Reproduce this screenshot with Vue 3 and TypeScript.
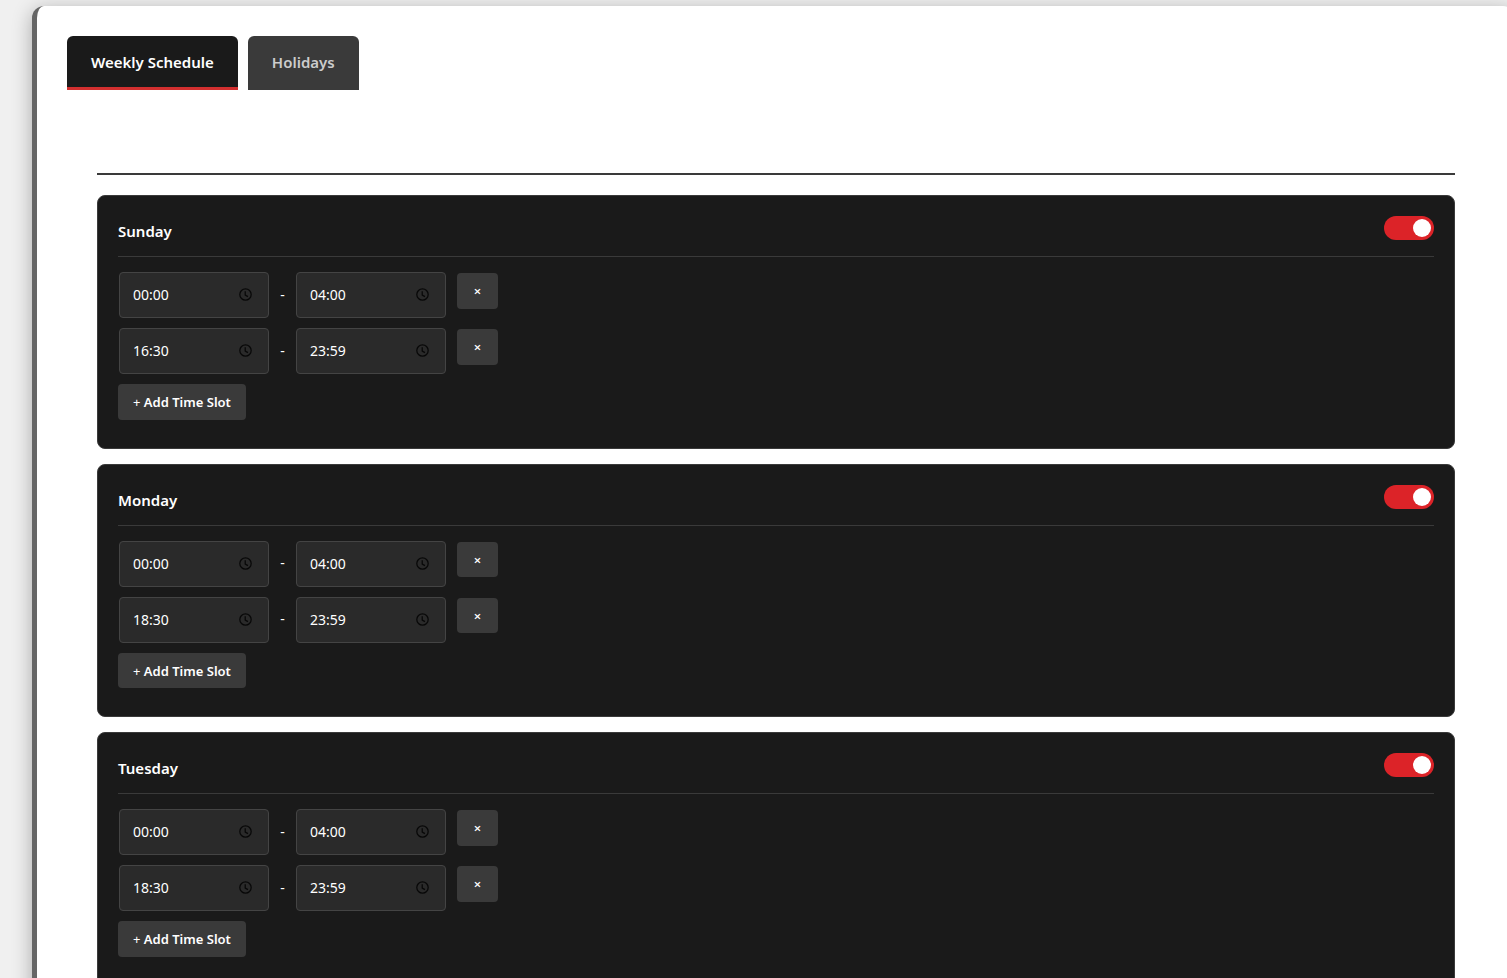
<script setup lang="ts">
import { ref } from 'vue'

interface Slot {
  from: string
  to: string
}

interface Day {
  name: string
  open: boolean
  slots: Slot[]
}

const tabs = ['Weekly Schedule', 'Holidays']
const activeTab = ref(tabs[0])

const days = ref<Day[]>([
  { name: 'Sunday', open: true, slots: [{ from: '00:00', to: '04:00' }, { from: '16:30', to: '23:59' }] },
  { name: 'Monday', open: true, slots: [{ from: '00:00', to: '04:00' }, { from: '18:30', to: '23:59' }] },
  { name: 'Tuesday', open: true, slots: [{ from: '00:00', to: '04:00' }, { from: '18:30', to: '23:59' }] },
])

function addSlot(day: Day) {
  day.slots.push({ from: '09:00', to: '17:00' })
}

function removeSlot(day: Day, index: number) {
  day.slots.splice(index, 1)
}
</script>

<template>
  <div class="page">
    <main class="panel">
      <nav class="tabs" role="tablist">
        <button
          v-for="tab in tabs"
          :key="tab"
          type="button"
          role="tab"
          class="tab"
          :class="{ active: tab === activeTab }"
          :aria-selected="tab === activeTab"
          @click="activeTab = tab"
        >{{ tab }}</button>
      </nav>

      <div class="content">
        <div class="divider"></div>
        <section v-for="day in days" :key="day.name" class="card">
          <header class="card-header">
            <h3 class="day">{{ day.name }}</h3>
            <input v-model="day.open" type="checkbox" role="switch" class="toggle" :aria-label="day.name" />
          </header>

          <div v-for="(slot, i) in day.slots" :key="i" class="slot">
            <label class="time">
              <input v-model="slot.from" type="text" class="time-input" :aria-label="day.name + ' start ' + (i + 1)" />
              <svg class="clock" viewBox="0 0 24 24" aria-hidden="true">
                <circle cx="12" cy="12" r="10.5" />
                <path d="M11.5 6v7l5 3" />
              </svg>
            </label>
            <span class="dash">-</span>
            <label class="time">
              <input v-model="slot.to" type="text" class="time-input" :aria-label="day.name + ' end ' + (i + 1)" />
              <svg class="clock" viewBox="0 0 24 24" aria-hidden="true">
                <circle cx="12" cy="12" r="10.5" />
                <path d="M11.5 6v7l5 3" />
              </svg>
            </label>
            <button type="button" class="btn remove" aria-label="Remove time slot" @click="removeSlot(day, i)">×</button>
          </div>

          <button type="button" class="btn" @click="addSlot(day)"><span class="plus">+</span> Add Time Slot</button>
        </section>
      </div>
    </main>
  </div>
</template>

<style>
body {
  margin: 0;
  background: #f0f0f0;
}
</style>

<style scoped>
.page {
  box-sizing: border-box;
  height: 100vh;
  overflow: hidden;
  padding: 6px 0 0 32px;
  background: #f0f0f0;
  font-family: 'Segoe UI', 'Noto Sans', 'Open Sans', sans-serif;
}

.panel {
  margin-right: -8px;
  padding: 30px;
  border-left: 5px solid #666;
  border-radius: 12px;
  background: #fff;
  box-shadow: 0 4px 20px rgba(0, 0, 0, 0.3);
}

.tabs {
  display: flex;
  gap: 10px;
}

.tab {
  padding: 14px 24px 13px;
  border: 0;
  border-bottom: 3px solid #3a3a3a;
  border-radius: 6px 6px 0 0;
  background: #3a3a3a;
  color: #ccc;
  font: 600 15px/24px 'Segoe UI', 'Noto Sans', 'Open Sans', sans-serif;
  cursor: pointer;
}

.tab.active {
  border-bottom-color: #d32f2f;
  background: #1a1a1a;
  color: #fff;
}

.content {
  padding: 30px;
}

.divider {
  height: 53px;
  margin-bottom: 20px;
  border-bottom: 2px solid #3a3a3a;
}

.card {
  margin-bottom: 15px;
  padding: 20px 20px 28px;
  border: 1px solid #3a3a3a;
  border-radius: 8px;
  background: #1a1a1a;
  color: #fff;
}

.card-header {
  display: flex;
  justify-content: space-between;
  align-items: flex-start;
  margin-bottom: 15px;
  padding-bottom: 13px;
  border-bottom: 1px solid #3a3a3a;
}

.day {
  margin: 3px 0 0;
  font-size: 15px;
  font-weight: 600;
  line-height: 24px;
}

.toggle {
  display: flex;
  align-items: center;
  box-sizing: border-box;
  width: 50px;
  height: 24px;
  margin: 0;
  padding: 0 3px;
  border-radius: 12px;
  background: #555;
  appearance: none;
  cursor: pointer;
}

.toggle::before {
  content: '';
  width: 18px;
  height: 18px;
  border-radius: 50%;
  background: #fff;
}

.toggle:checked {
  justify-content: flex-end;
  background: #dc2328;
}

.slot {
  display: flex;
  align-items: center;
  margin: 0 0 10px 1px;
}

.time {
  position: relative;
  width: 150px;
}

.time-input {
  display: block;
  box-sizing: border-box;
  width: 100%;
  height: 46px;
  padding: 0 36px 1px 13px;
  border: 1px solid #444;
  border-radius: 4px;
  background: #2a2a2a;
  color: #fff;
  font: 400 14px/20px 'Segoe UI', 'Noto Sans', 'Open Sans', sans-serif;
}

.clock {
  position: absolute;
  top: 16px;
  right: 17px;
  width: 13px;
  height: 13px;
  overflow: visible;
  fill: none;
  stroke: #080808;
  stroke-width: 2.4;
}

.dash {
  width: 27px;
  padding-bottom: 1px;
  font-size: 14px;
  line-height: 20px;
  text-align: center;
}

.btn {
  display: block;
  padding: 9px 15px 7px;
  border: 0;
  border-radius: 4px;
  background: #3a3a3a;
  color: #fff;
  font: 600 13px/1.5 'Segoe UI', 'Noto Sans', 'Open Sans', sans-serif;
  cursor: pointer;
}

.plus {
  font-weight: 400;
}

.remove {
  align-self: flex-start;
  width: 41px;
  margin: 1px 0 0 11px;
}
</style>
